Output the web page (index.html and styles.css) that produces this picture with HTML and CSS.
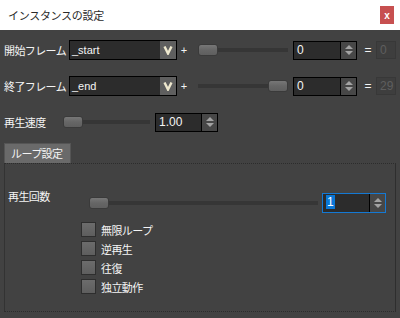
FILE: index.html
```html
<!DOCTYPE html>
<html lang="ja">
<head>
  <meta charset="UTF-8">
  <title>インスタンスの設定</title>
  <link rel="stylesheet" href="styles.css">
</head>
<body>
  <div class="titlebar">
    <span class="title">インスタンスの設定</span>
    <span class="close">x</span>
  </div>
  <div class="panel">
    <div class="row">
      <span class="label label-frame">開始フレーム</span>
      <div class="combo">
        <span class="combo-text">_start</span>
        <span class="combo-btn"><svg width="10" height="10" viewBox="0 0 10 10"><polyline points="1.5,1.5 5,8.5 8.5,1.5" fill="none" stroke="#efe9cf" stroke-width="2.4"/></svg></span>
      </div>
      <span class="plus">+</span>
      <div class="slider slider-frame">
        <span class="handle"></span>
        <span class="track"></span>
      </div>
      <div class="spin spin-frame">
        <span class="spin-text">0</span>
        <span class="spin-btns"><span class="up"></span><span class="down"></span></span>
      </div>
      <span class="eq">=</span>
      <span class="result">0</span>
    </div>
    <div class="row">
      <span class="label label-frame">終了フレーム</span>
      <div class="combo">
        <span class="combo-text">_end</span>
        <span class="combo-btn"><svg width="10" height="10" viewBox="0 0 10 10"><polyline points="1.5,1.5 5,8.5 8.5,1.5" fill="none" stroke="#efe9cf" stroke-width="2.4"/></svg></span>
      </div>
      <span class="plus">+</span>
      <div class="slider slider-frame">
        <span class="track"></span>
        <span class="handle"></span>
      </div>
      <div class="spin spin-frame">
        <span class="spin-text">0</span>
        <span class="spin-btns"><span class="up"></span><span class="down"></span></span>
      </div>
      <span class="eq">=</span>
      <span class="result">29</span>
    </div>
    <div class="row">
      <span class="label label-speed">再生速度</span>
      <div class="slider slider-speed">
        <span class="handle"></span>
        <span class="track"></span>
      </div>
      <div class="spin spin-speed">
        <span class="spin-text">1.00</span>
        <span class="spin-btns"><span class="up"></span><span class="down"></span></span>
      </div>
    </div>

    <div class="tab">ループ設定</div>
    <div class="group">
      <div class="row row-count">
        <span class="label label-count">再生回数</span>
        <div class="slider slider-count">
          <span class="handle"></span>
          <span class="track"></span>
        </div>
        <div class="spin spin-count focused">
          <span class="spin-text"><span class="sel">1</span></span>
          <span class="spin-btns"><span class="up"></span><span class="down"></span></span>
        </div>
      </div>
      <div class="checks">
        <label class="check"><span class="box"></span>無限ループ</label>
        <label class="check"><span class="box"></span>逆再生</label>
        <label class="check"><span class="box"></span>往復</label>
        <label class="check"><span class="box"></span>独立動作</label>
      </div>
    </div>
  </div>
</body>
</html>
```

FILE: styles.css
```css
body {
  margin: 0;
  width: 400px;
  height: 318px;
  background-color: #424242;
  font-family: "Noto Sans CJK JP", sans-serif;
  font-size: 11px;
  color: #f4f4f4;
  overflow: hidden;
}
.titlebar {
  height: 30px;
  background-color: #fff;
  display: flex;
  align-items: center;
  padding-left: 8px;
}
.title {
  color: #2a2a2a;
  font-size: 11px;
  letter-spacing: -0.3px;
}
.close {
  margin-left: auto;
  margin-right: 6px;
  width: 14px;
  height: 18px;
  background-color: #c75050;
  color: #fff;
  font-family: "Liberation Sans", sans-serif;
  font-weight: bold;
  font-size: 10px;
  display: flex;
  align-items: center;
  justify-content: center;
}
.panel {
  padding: 10px 4px 0;
}
.row {
  display: flex;
  align-items: center;
  height: 20px;
  margin-bottom: 16px;
}
.label {
  letter-spacing: -0.6px;
  flex-shrink: 0;
}
.label-frame {
  width: 65px;
}
.label-speed {
  width: 59px;
}
.label-count {
  width: 81px;
  align-self: flex-start;
  margin-top: -5px;
}
/* コンボボックス */
.combo {
  width: 108px;
  height: 20px;
  box-sizing: border-box;
  border: 1px solid #000;
  background-color: #2c2c2c;
  display: flex;
}
.combo-text {
  flex: 1;
  padding-left: 2px;
  font-family: "Liberation Sans", sans-serif;
  font-size: 11px;
  line-height: 18px;
}
.combo-btn {
  width: 16px;
  background-color: #5f5f5f;
  display: flex;
  align-items: center;
  justify-content: center;
}
.plus {
  width: 14px;
  text-align: center;
  font-family: "Liberation Sans", sans-serif;
  font-size: 11px;
}
/* スライダー */
.slider {
  display: flex;
  align-items: center;
  height: 14px;
}
.slider-frame {
  width: 90px;
  margin-left: 7px;
}
.slider-speed {
  width: 87px;
}
.slider-count {
  width: 229px;
}
.track {
  flex: 1;
  height: 4px;
  background-color: #363636;
}
.handle {
  width: 20px;
  height: 12px;
  box-sizing: border-box;
  border: 1px solid #3a3a3a;
  border-radius: 3px;
  background: linear-gradient(#777, #666 50%, #5f5f5f);
  flex-shrink: 0;
}
/* スピンボックス */
.spin {
  height: 19px;
  box-sizing: border-box;
  border: 1px solid #000;
  display: flex;
  margin-left: 5px;
}
.spin-frame {
  width: 64px;
}
.spin-speed {
  width: 63px;
}
.spin-count {
  width: 64px;
  height: 20px;
  margin-left: 4px;
}
.spin.focused {
  border-color: #1479d4;
}
.spin-text {
  flex: 1;
  background-color: #2c2c2c;
  padding-left: 3px;
  font-family: "Liberation Sans", sans-serif;
  font-size: 12px;
  line-height: 17px;
}
.sel {
  background-color: #0a78d7;
  color: #fff;
  padding: 0 1px;
}
.spin-btns {
  width: 15px;
  border-left: 1px solid #000;
  background-color: #474747;
  display: flex;
  flex-direction: column;
  align-items: center;
  justify-content: center;
  gap: 2px;
}
.up {
  width: 0;
  height: 0;
  border-left: 4px solid transparent;
  border-right: 4px solid transparent;
  border-bottom: 4px solid #a3a3a3;
}
.down {
  width: 0;
  height: 0;
  border-left: 4px solid transparent;
  border-right: 4px solid transparent;
  border-top: 4px solid #a3a3a3;
}
.eq {
  width: 19px;
  padding-left: 3px;
  box-sizing: border-box;
  text-align: center;
  font-family: "Liberation Sans", sans-serif;
  font-size: 12px;
}
.result {
  width: 20px;
  height: 18px;
  box-sizing: border-box;
  border: 1px solid #383838;
  background-color: #3e3e3e;
  color: #5e5e5e;
  padding-left: 3px;
  font-family: "Liberation Sans", sans-serif;
  font-size: 12px;
  line-height: 16px;
}
/* ループ設定 */
.tab {
  width: 67px;
  height: 20px;
  box-sizing: border-box;
  margin-top: -5px;
  background-color: #6a6a6a;
  border: 1px solid #555;
  border-bottom: none;
  padding-left: 6px;
  line-height: 19px;
  letter-spacing: -0.6px;
}
.group {
  width: 392px;
  height: 149px;
  box-sizing: border-box;
  border-top: 1px dotted #2c2c2c;
  border-bottom: 1px dotted #2c2c2c;
  border-left: 1px solid #333;
  border-right: 1px solid #2e2e2e;
  padding-left: 3px;
}
.row-count {
  margin-top: 29px;
  margin-bottom: 0;
}
.checks {
  margin-top: 9px;
  padding-left: 73px;
  display: flex;
  flex-direction: column;
  gap: 4px;
}
.check {
  display: flex;
  align-items: center;
  height: 15px;
  letter-spacing: -0.6px;
}
.box {
  width: 15px;
  height: 15px;
  box-sizing: border-box;
  border: 1px solid #2e2e2e;
  background: linear-gradient(#6c6c6c, #5e5e5e);
  margin-right: 5px;
}
```
